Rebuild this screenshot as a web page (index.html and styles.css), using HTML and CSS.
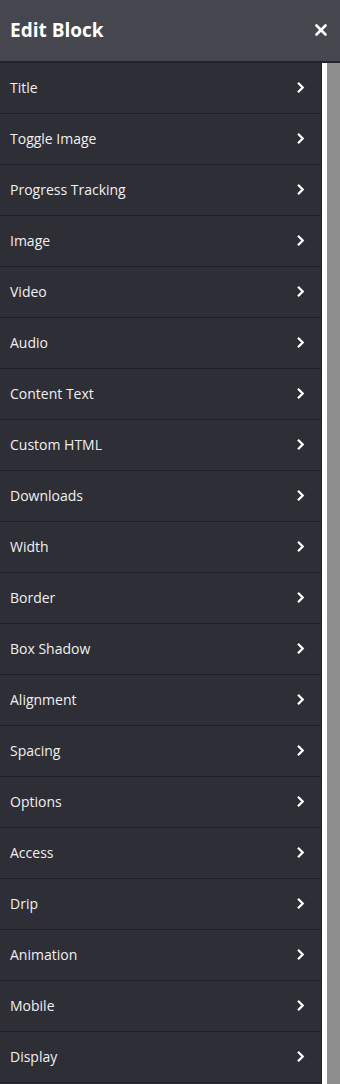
FILE: index.html
```html
<!DOCTYPE html>
<html lang="en">
<head>
  <meta charset="UTF-8" />
  <meta name="viewport" content="width=device-width, initial-scale=1" />
  <title>Edit Block</title>
  <link rel="stylesheet" href="styles.css">
</head>
<body>
  <div class="panel">
    <div class="panel-header">
      <h2>Edit Block</h2>
      <button class="close" aria-label="Close">
        <svg width="12" height="12" viewBox="0 0 12 12"><path d="M1.5 1.5 L10.5 10.5 M10.5 1.5 L1.5 10.5" stroke="#fff" stroke-width="2.6" stroke-linecap="round"/></svg>
      </button>
    </div>

    <div class="panel-body">
      <ul class="menu" id="menu"></ul>
      <div class="scrollbar"><div class="thumb"></div></div>
    </div>
  </div>

  <script>
    const items = ["Title", "Toggle Image", "Progress Tracking", "Image", "Video", "Audio",
      "Content Text", "Custom HTML", "Downloads", "Width", "Border", "Box Shadow",
      "Alignment", "Spacing", "Options", "Access", "Drip", "Animation", "Mobile", "Display"];

    const chevron = '<svg width="9" height="13" viewBox="0 0 9 13"><path d="M2 1.8 L6.7 6.5 L2 11.2" fill="none" stroke="#fff" stroke-width="2.3"/></svg>';

    document.getElementById("menu").innerHTML = items.map(name =>
      `<li class="menu-item"><span>${name}</span>${chevron}</li>`).join("");
  </script>
</body>
</html>
```

FILE: styles.css
```css
body {
  margin: 0;
  font-family: "Open Sans", Arial, sans-serif;
  background: #2e2e36;
}

.panel {
  width: 340px;
  height: 1084px;
  display: flex;
  flex-direction: column;
  overflow: hidden;
}

.panel-header {
  height: 61px;
  flex: none;
  box-sizing: border-box;
  display: flex;
  align-items: center;
  justify-content: space-between;
  padding: 0 13px 2px 10px;
  background: #46464f;
  border-bottom: 2px solid #232328;
  height: 63px;
}

.panel-header h2 {
  margin: 0;
  font-size: 19px;
  font-weight: 700;
  color: #fff;
}

.close {
  background: none;
  border: none;
  padding: 0;
  display: flex;
  cursor: pointer;
}

.panel-body {
  flex: 1;
  display: flex;
  min-height: 0;
}

.menu {
  list-style: none;
  margin: 0;
  padding: 0;
  width: 321px;
  background: #2e2e36;
  border-right: 1px solid #1d1d22;
}

.menu-item {
  height: 51px;
  box-sizing: border-box;
  display: flex;
  align-items: center;
  justify-content: space-between;
  padding: 0 16px 2px 10px;
  border-bottom: 1px solid #1e1e23;
  font-size: 14px;
  color: #f0f0f0;
  cursor: pointer;
}

.scrollbar {
  flex: 1;
  background: #fff;
  padding-left: 5px;
  display: flex;
}

.thumb {
  flex: 1;
  background: #8e8e8e;
}
```
